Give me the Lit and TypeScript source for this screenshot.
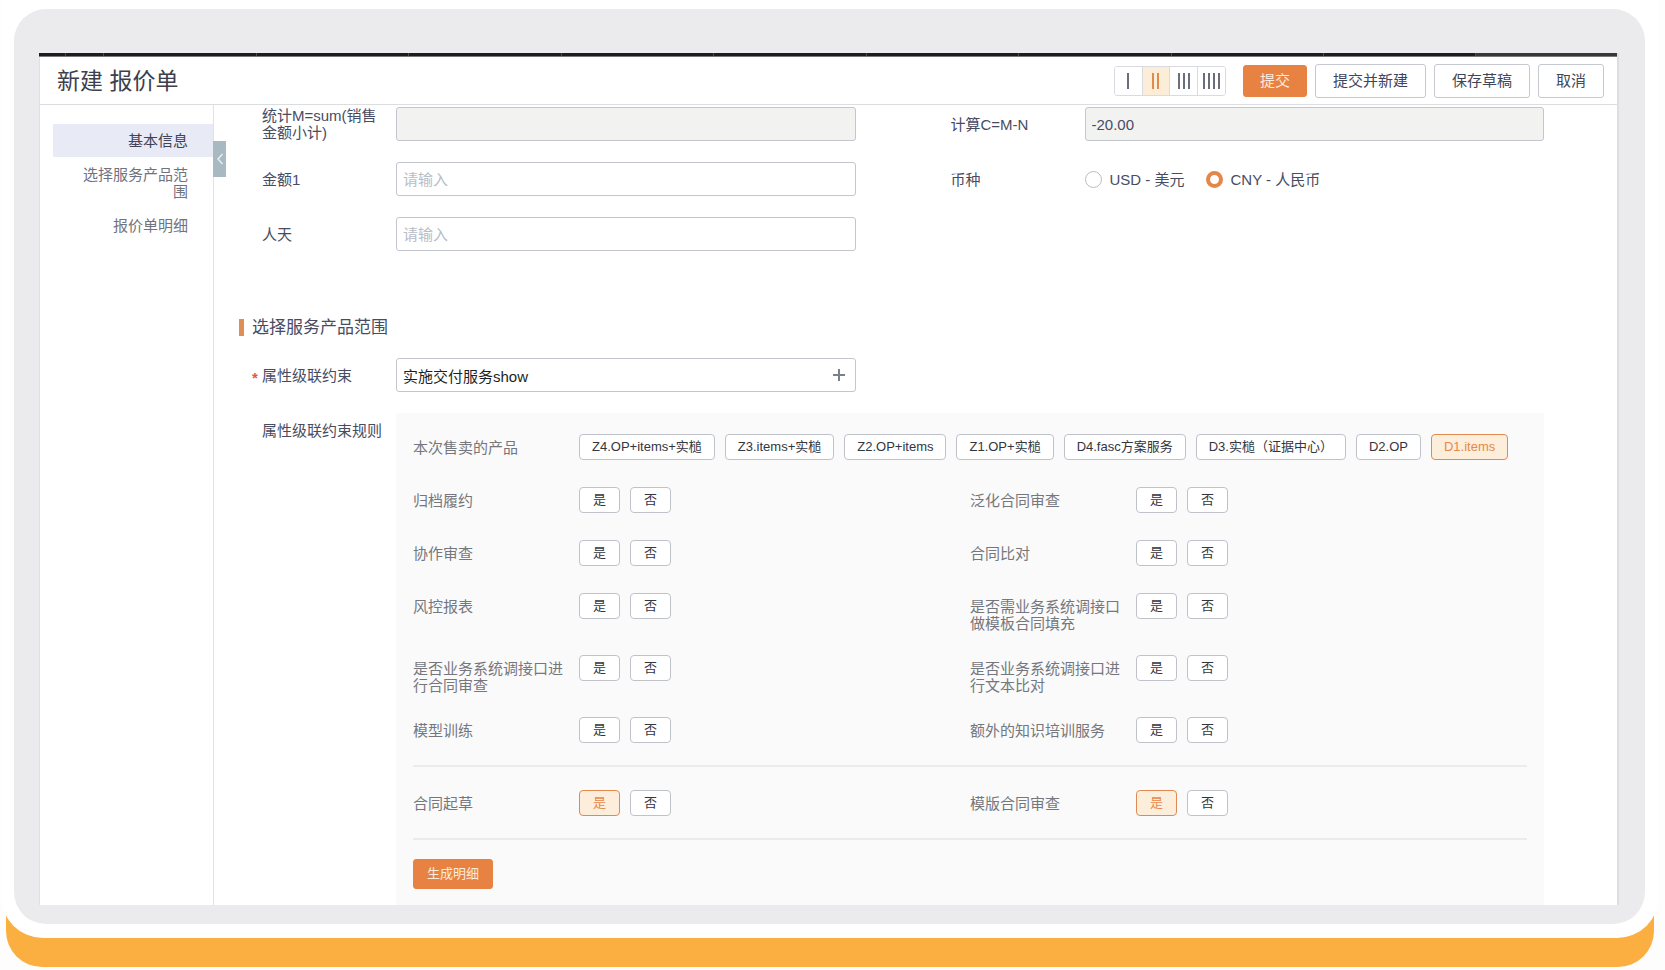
import { LitElement, html, css, svg, nothing } from "lit";
import { customElement, property, state } from "lit/decorators.js";
import { classMap } from "lit/directives/class-map.js";

const SHARED = css`
  * {
    box-sizing: border-box;
  }
  button,
  input {
    font-family: inherit;
    margin: 0;
  }
  button {
    cursor: pointer;
  }
`;

/** A labelled set of chips of which one can be chosen. */
@customElement("option-row")
class OptionRow extends LitElement {
  @property() label = "";
  @property({ attribute: false }) options: string[] = ["是", "否"];
  @property() chosen = "";

  static styles = [
    SHARED,
    css`
      :host {
        display: block;
        min-width: 0;
      }
      .row {
        display: flex;
        align-items: flex-start;
        gap: 14px;
        min-height: 30px;
      }
      .name {
        flex: 0 0 152px;
        padding-top: 5px;
        font-size: 15px;
        line-height: 17px;
        color: #75777d;
      }
      .chips {
        display: flex;
        flex-wrap: wrap;
        gap: 10px;
      }
      .chip {
        min-width: 41px;
        height: 26px;
        padding: 0 12px;
        border: 1px solid #bfc3c9;
        border-radius: 4px;
        background: #fff;
        color: #33363d;
        font-size: 13px;
        line-height: 22px;
        white-space: nowrap;
      }
      .chip.on {
        border-color: #e08a52;
        background: #fdeedb;
        color: #e6894b;
      }
    `,
  ];

  render() {
    return html`
      <div class="row" role="group" aria-labelledby="name">
        <div class="name" id="name">${this.label}</div>
        <div class="chips">
          ${this.options.map(
            (o) => html`<button
              type="button"
              class=${classMap({ chip: true, on: o === this.chosen })}
              aria-pressed=${o === this.chosen ? "true" : "false"}
              @click=${() => (this.chosen = o)}
            >${o}</button>`
          )}
        </div>
      </div>
    `;
  }
}

const PRODUCTS = [
  "Z4.OP+items+实槌",
  "Z3.items+实槌",
  "Z2.OP+items",
  "Z1.OP+实槌",
  "D4.fasc方案服务",
  "D3.实槌（证据中心）",
  "D2.OP",
  "D1.items",
];

const QUESTIONS = [
  "归档履约",
  "泛化合同审查",
  "协作审查",
  "合同比对",
  "风控报表",
  "是否需业务系统调接口做模板合同填充",
  "是否业务系统调接口进行合同审查",
  "是否业务系统调接口进行文本比对",
  "模型训练",
  "额外的知识培训服务",
];

const DERIVED = ["合同起草", "模版合同审查"];

const SECTIONS = ["基本信息", "选择服务产品范围", "报价单明细"];

@customElement("app-root")
class AppRoot extends LitElement {
  @state() columns = 2;
  @state() section = 0;
  @state() currency = "CNY";

  static styles = [
    SHARED,
    css`
      :host {
        display: block;
        min-height: 100vh;
        padding: 0 11px 3px 6px;
        background: #fdfdfd;
        font-family: "Liberation Sans", "Noto Sans CJK SC", sans-serif;
        color: #484c63;
        overflow: hidden;
      }

      /* device mock-up */
      .stand {
        padding-bottom: 29px;
        border-radius: 0 0 36px 36px;
        background: #fbaf40;
      }
      .shell {
        margin: 0 -5px;
        padding: 9px 14px 14px 13px;
        border-radius: 0 0 42px 42px;
        background: #fff;
      }
      .bezel {
        padding: 44px 26px 19px 25px;
        border-radius: 32px;
        background: #ebebed;
      }
      .screen {
        border-right: 2px solid #dcdde0;
        border-left: 1px solid #dfe0e3;
        background: #fff;
      }
      .tabs {
        display: flex;
        height: 4px;
        margin-left: -1px;
        border-bottom: 1px solid #77797c;
        background: #1b1c1e;
      }
      .tab {
        flex: 153 1 0;
        border-right: 1px solid #4a4b4e;
      }
      .tab.tiny {
        flex-grow: 26;
      }
      .tab.small {
        flex-grow: 38;
      }
      .tab.rest {
        flex-grow: 142;
        border-right: 0;
        background: #36373a;
      }

      /* header */
      .header {
        display: flex;
        align-items: center;
        justify-content: space-between;
        height: 48px;
        padding: 0 13px 0 17px;
        border-bottom: 1px solid #dcdde1;
      }
      .title {
        margin: 0;
        font-size: 23px;
        line-height: 30px;
        font-weight: 400;
        color: #3d404b;
      }
      .actions {
        display: flex;
        align-items: center;
        gap: 8px;
      }
      .switch {
        display: flex;
        width: 112px;
        height: 30px;
        margin-right: 9px;
        border: 1px solid #d9dbe0;
        border-radius: 3px;
        overflow: hidden;
      }
      .cell {
        flex: 1;
        display: grid;
        place-items: center;
        padding: 0;
        border: 0;
        background: #fff;
        color: #6b6f7c;
      }
      .cell + .cell {
        border-left: 1px solid #d9dbe0;
      }
      .cell.on {
        background: #fcedd8;
        color: #e08a4c;
      }
      .btn {
        height: 34px;
        padding: 0 17px;
        border: 1px solid #c6c9cf;
        border-radius: 3px;
        background: #fff;
        color: #41455a;
        font-size: 15px;
        line-height: 30px;
      }
      .btn.primary {
        height: 32px;
        padding: 0 16px;
        border-color: #e88243;
        background: #e88243;
        color: #fdebdc;
        line-height: 28px;
      }
      .btn.generate {
        height: 30px;
        padding: 0 13px;
        font-size: 13px;
        line-height: 26px;
      }

      /* body */
      .body {
        display: grid;
        grid-template-columns: 174px minmax(0, 1fr);
      }
      .side {
        position: relative;
        padding: 19px 0 0 13px;
        border-right: 1px solid #e1e2e7;
      }
      .nav {
        display: flex;
        flex-direction: column;
        gap: 1px;
      }
      .link {
        padding: 8px 25px 8px 24px;
        font-size: 15px;
        line-height: 17px;
        text-align: right;
        text-decoration: none;
        color: #70737f;
      }
      .link.on {
        background: #e8eaf5;
        color: #3f4356;
      }
      .fold {
        position: absolute;
        top: 36px;
        right: -13px;
        display: grid;
        place-items: center;
        width: 13px;
        height: 36px;
        padding: 0;
        border: 0;
        background: #a9b9c1;
        color: #e9eef1;
      }
      .form {
        padding: 2px 73px 0 48px;
      }
      .grid {
        display: grid;
        grid-template-columns: minmax(0, 1fr) minmax(0, 1fr);
        gap: 21px 95px;
      }
      .wide {
        grid-column: 1 / -1;
      }
      .item {
        display: grid;
        grid-template-columns: 120px minmax(0, 1fr);
        column-gap: 14px;
        align-items: start;
      }
      .label {
        position: relative;
        display: flex;
        align-items: center;
        min-height: 34px;
        font-size: 15px;
        line-height: 17px;
      }
      .star {
        position: absolute;
        left: -10px;
        top: 11px;
        color: #e2574c;
        font-weight: 700;
      }
      .field {
        display: flex;
        align-items: center;
        width: 100%;
        height: 34px;
        padding: 0 6px;
        border: 1px solid #c3c6cc;
        border-radius: 3px;
        background: #fff;
        color: #484c63;
        font-size: 15px;
      }
      .field::placeholder {
        color: #b9bdc7;
        opacity: 1;
      }
      .field:read-only:not(.combo) {
        background: #f2f2f1;
      }
      .combo {
        padding-right: 9px;
      }
      .combo .inner {
        flex: 1;
        min-width: 0;
        height: 30px;
        padding: 0;
        border: 0;
        outline: 0;
        background: none;
        color: #1d1f24;
        font-size: 15px;
      }
      .add {
        display: grid;
        place-items: center;
        width: 14px;
        height: 14px;
        padding: 0;
        border: 0;
        background: none;
        color: #7b8090;
      }
      .radios {
        display: flex;
        align-items: center;
        gap: 21px;
        height: 34px;
      }
      .radio {
        display: flex;
        align-items: center;
        gap: 8px;
        font-size: 15px;
        line-height: 17px;
        white-space: nowrap;
      }
      .dot {
        appearance: none;
        width: 17px;
        height: 17px;
        border: 1px solid #b9bcc4;
        border-radius: 50%;
        background: #fff;
      }
      .dot:checked {
        border: 4px solid #e3884a;
      }
      .heading {
        display: flex;
        align-items: center;
        gap: 8px;
        margin: 65px 0 19px -23px;
        font-size: 17px;
        line-height: 23px;
        font-weight: 400;
      }
      .heading::before {
        content: "";
        width: 5px;
        height: 17px;
        background: #e08e57;
      }
      .panel {
        padding: 21px 17px 16px;
        background: #fafafa;
      }
      .rows {
        display: grid;
        grid-template-columns: minmax(0, 1fr) minmax(0, 1fr);
        row-gap: 23px;
      }
      .rule {
        margin: 18px 0 23px;
        border: 0;
        border-top: 2px solid #ebebed;
      }
      .rule.last {
        margin-bottom: 19px;
      }
    `,
  ];

  private bars(n: number) {
    const start = 10 - (n * 5 - 3) / 2;
    return html`<svg width="20" height="16" viewBox="0 0 20 16" aria-hidden="true">
      ${Array.from(
        { length: n },
        (_, i) => svg`<rect x=${Math.floor(start + i * 5)} y="0" width="2" height="16" fill="currentColor"></rect>`
      )}
    </svg>`;
  }

  private textItem(id: string, label: string, value: string, locked: boolean) {
    return html`<div class="item">
      <label class="label" for=${id}>${label}</label>
      <input
        class="field"
        id=${id}
        type="text"
        .value=${value}
        ?readonly=${locked}
        placeholder=${locked ? nothing : "请输入"}
      />
    </div>`;
  }

  private radio(value: string, text: string) {
    return html`<label class="radio">
      <input
        class="dot"
        type="radio"
        name="currency"
        value=${value}
        .checked=${this.currency === value}
        @change=${() => (this.currency = value)}
      />${text}
    </label>`;
  }

  private header() {
    return html`<header class="header">
      <h1 class="title">新建 报价单</h1>
      <div class="actions">
        <div class="switch" role="group" aria-label="列数">
          ${[1, 2, 3, 4].map(
            (n) => html`<button
              type="button"
              class=${classMap({ cell: true, on: n === this.columns })}
              aria-label="${n}列"
              aria-pressed=${n === this.columns ? "true" : "false"}
              @click=${() => (this.columns = n)}
            >${this.bars(n)}</button>`
          )}
        </div>
        <button type="button" class="btn primary">提交</button>
        <button type="button" class="btn">提交并新建</button>
        <button type="button" class="btn">保存草稿</button>
        <button type="button" class="btn">取消</button>
      </div>
    </header>`;
  }

  private sidebar() {
    return html`<aside class="side">
      <nav class="nav">
        ${SECTIONS.map(
          (name, i) => html`<a
            href="#section-${i}"
            class=${classMap({ link: true, on: i === this.section })}
            @click=${() => (this.section = i)}
          >${name}</a>`
        )}
      </nav>
      <button type="button" class="fold" aria-label="收起">
        <svg width="8" height="14" viewBox="0 0 8 14" aria-hidden="true">
          <path d="M6.5 2 L2 7 L6.5 12" fill="none" stroke="currentColor" stroke-width="1.4"></path>
        </svg>
      </button>
    </aside>`;
  }

  private rules() {
    return html`<div class="panel">
      <div class="rows">
        <option-row class="wide" label="本次售卖的产品" .options=${PRODUCTS} chosen="D1.items"></option-row>
        ${QUESTIONS.map((q) => html`<option-row label=${q}></option-row>`)}
      </div>
      <hr class="rule" />
      <div class="rows">
        ${DERIVED.map((q) => html`<option-row label=${q} chosen="是"></option-row>`)}
      </div>
      <hr class="rule last" />
      <button type="button" class="btn primary generate">生成明细</button>
    </div>`;
  }

  render() {
    return html`<div class="stand"><div class="shell"><div class="bezel"><div class="screen">
      <div class="tabs" aria-hidden="true">
        <span class="tab tiny"></span>
        <span class="tab small"></span>
        ${Array.from({ length: 9 }, () => html`<span class="tab"></span>`)}
        <span class="tab rest"></span>
      </div>
      ${this.header()}
      <div class="body">
        ${this.sidebar()}
        <main class="form">
          <div class="grid" id="section-0">
            ${this.textItem("total", "统计M=sum(销售金额小计)", "", true)}
            ${this.textItem("calc", "计算C=M-N", "-20.00", true)}
            ${this.textItem("amount", "金额1", "", false)}
            <div class="item" role="radiogroup" aria-labelledby="currency-label">
              <div class="label" id="currency-label">币种</div>
              <div class="radios">
                ${this.radio("USD", "USD - 美元")}
                ${this.radio("CNY", "CNY - 人民币")}
              </div>
            </div>
            ${this.textItem("days", "人天", "", false)}
          </div>
          <h2 class="heading" id="section-1">选择服务产品范围</h2>
          <div class="grid">
            <div class="item">
              <label class="label" for="cascade"><span class="star">*</span>属性级联约束</label>
              <div class="field combo">
                <input class="inner" id="cascade" type="text" .value=${"实施交付服务show"} />
                <button type="button" class="add" aria-label="添加">
                  <svg width="12" height="12" viewBox="0 0 12 12" aria-hidden="true">
                    <path d="M6 0V12M0 6H12" stroke="currentColor" stroke-width="2"></path>
                  </svg>
                </button>
              </div>
            </div>
            <div class="item wide">
              <div class="label">属性级联约束规则</div>
              ${this.rules()}
            </div>
          </div>
        </main>
      </div>
    </div></div></div></div>`;
  }
}
